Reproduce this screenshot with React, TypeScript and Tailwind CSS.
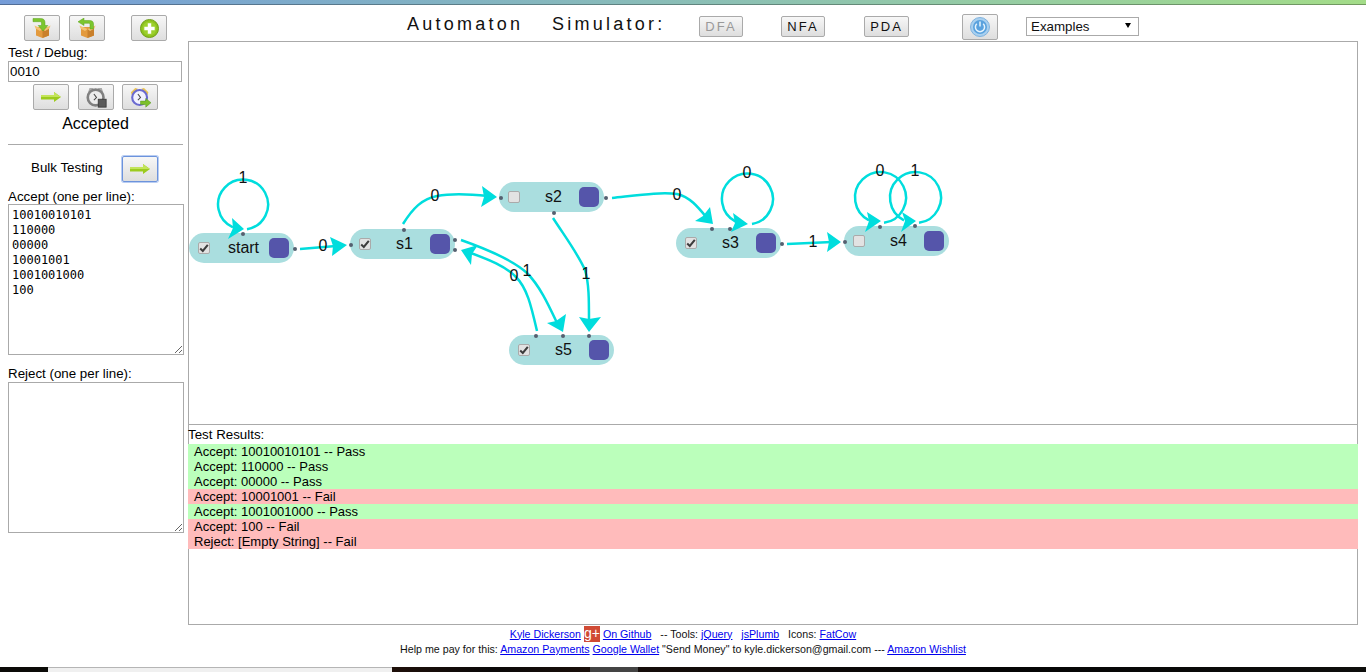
import React from "react"

const nodes = [
  { name: "start", x: 189, y: 233, checked: true },
  { name: "s1", x: 350, y: 229, checked: true },
  { name: "s2", x: 499, y: 182, checked: false },
  { name: "s3", x: 676, y: 228, checked: true },
  { name: "s4", x: 844, y: 226, checked: false },
  { name: "s5", x: 509, y: 335, checked: true },
]

const dots = [
  [243, 234], [295, 249], [351, 245], [404, 230], [455, 240], [455, 250],
  [501, 198], [606, 198], [554, 213], [712, 229], [730, 229], [782, 244],
  [845, 242], [880, 227], [915, 226], [536, 336], [563, 336], [589, 336],
]

// path + arrow head (tip, wing, notch, wing)
const edges = [
  { d: "M247 229.2 A25 25 0 1 0 233 227.4", head: "244,229 228,239 233,228 232,218" },
  { d: "M300 249 L336 246", head: "347,245 330,237 333,246 332,256" },
  { d: "M403 224 C413 208 422 199 437 196 C452 193 470 194 488 196", head: "497,197 482,186 484,197 481,207" },
  { d: "M461 240 C495 252 515 262 527 273 C540 286 549 306 558 325", head: "563,332 547,323 556,321 566,314" },
  { d: "M537 331 C531 305 527 288 516 277 C505 266 490 260 468 252", head: "461,250 478,245 472,254 471,265" },
  { d: "M553 218 C566 238 578 254 585 270 C589 283 589 300 589 322", head: "589,332 579,317 589,319 601,317" },
  { d: "M612 198 C640 195 660 192 677 194 C690 197 698 207 707 218", head: "713,224 695,221 703,216 710,207" },
  { d: "M752 224.1 A25.5 25.5 0 1 0 736 221.8", head: "748,224 731,232 735,223 733,213" },
  { d: "M787 244 L832 242", head: "841,242 827,232 829,242 827,252" },
  { d: "M884 222.8 A25.5 25.5 0 1 0 869 220.3", head: "881,221 865,232 869,221 867,212" },
  { d: "M919 222.8 A25.5 25.5 0 1 0 904 220.3", head: "916,221 901,232 905,221 902,212" },
]

const labels = [
  ["1", 243, 178], ["0", 323, 246], ["0", 435, 196], ["1", 527, 271], ["0", 514, 276], ["1", 586, 274],
  ["0", 677, 195], ["0", 747, 173], ["1", 813, 242], ["0", 880, 171], ["1", 915, 171],
] as const

const results = [
  { text: "Accept: 10010010101 -- Pass", ok: true },
  { text: "Accept: 110000 -- Pass", ok: true },
  { text: "Accept: 00000 -- Pass", ok: true },
  { text: "Accept: 10001001 -- Fail", ok: false },
  { text: "Accept: 1001001000 -- Pass", ok: true },
  { text: "Accept: 100 -- Fail", ok: false },
  { text: "Reject: [Empty String] -- Fail", ok: false },
]

function IconButton({ children, className = "" }: { children: React.ReactNode; className?: string }) {
  return (
    <button className={`flex h-[26px] w-[36px] shrink-0 items-center justify-center rounded-[2px] border border-[#aaa] bg-linear-to-b from-[#f7f7f7] to-[#dedede] ${className}`}>
      {children}
    </button>
  )
}

function ModeButton({ label, disabled, className = "" }: { label: string; disabled?: boolean; className?: string }) {
  return (
    <button className={`flex h-[21px] shrink-0 items-center justify-center rounded-[2px] border border-[#aaa] bg-linear-to-b from-[#f7f7f7] to-[#dedede] text-[13px] tracking-[2px] ${disabled ? "text-[#999]" : "text-[#111]"} ${className}`}>
      {label}
    </button>
  )
}

function BoxIcon({ flip }: { flip?: boolean }) {
  return (
    <svg width="20" height="20" viewBox="0 0 20 20">
      <path d="M4 9 L17 9 L17 17.5 L10.5 20 L4 17.5 Z" fill="#e39a3e" />
      <path d="M10.5 11 L10.5 20 L17 17.5 L17 9 Z" fill="#c9802c" />
      <path d="M2.5 7.5 L7 9.5 L10.5 11 L8 13 L3.5 10.5 Z M18.5 7.5 L14 9.5 L10.5 11 L13 13 L17.5 10.5 Z" fill="#f2c373" />
      <path
        d={flip
          ? "M16.5 11 L16.5 6 C16.5 3.5 15 2.5 12.5 2.5 L7 2.5 L7 0 L1 3.8 L7 7.5 L7 5.3 L11.5 5.3 C12.6 5.3 13 5.8 13 6.8 L13 11 Z"
          : "M1 0.5 L8.5 0.5 C11.5 0.5 13 2 13 4.5 L13 7.5 L15.8 7.5 L11 13 L6.2 7.5 L9.5 7.5 L9.5 5.2 C9.5 4.2 9 3.7 8 3.7 L1 3.7 Z"}
        fill="#7cc62e"
        stroke="#5ba01c"
        strokeWidth="0.5"
      />
    </svg>
  )
}

function GreenArrow() {
  return (
    <svg width="20" height="10" viewBox="0 0 20 10">
      <path d="M0 3 L13 3 L13 0 L20 5 L13 10 L13 7.5 L0 7.5 Z" fill="#9ccb1e" />
      <path d="M0 3 L13 3 L13 0 L17 3 L20 5 L0 5 Z" fill="#c3e45a" />
    </svg>
  )
}

function PlusIcon() {
  return (
    <svg width="19" height="19" viewBox="0 0 22 22">
      <circle cx="11" cy="11" r="10.5" fill="#8dc21f" stroke="#6b9a14" />
      <circle cx="11" cy="11" r="8" fill="#9cd02c" />
      <path d="M9 5 H13 V9 H17 V13 H13 V17 H9 V13 H5 V9 H9 Z" fill="#fff" />
    </svg>
  )
}

function ClockStopIcon() {
  return (
    <svg width="21" height="21" viewBox="0 0 24 24">
      <path d="M4 1 L9 1 L2 7 Z M18 1 L13 1 L20 7 Z" fill="#aaa" />
      <circle cx="11" cy="12" r="9" fill="#ececec" stroke="#808080" strokeWidth="3" />
      <path d="M9 8 L12 12 L9 15" fill="none" stroke="#444" strokeWidth="1.2" />
      <rect x="14" y="14" width="9" height="9" fill="#5a5a5a" stroke="#3a3a3a" />
    </svg>
  )
}

function ClockPlayIcon() {
  return (
    <svg width="21" height="21" viewBox="0 0 24 24">
      <path d="M1 6 L6 1 L9 2 L2 9 Z M21 6 L16 1 L13 2 L20 9 Z" fill="#e9c252" />
      <circle cx="11" cy="12" r="8.5" fill="#f2f2ff" stroke="#6a6ad0" strokeWidth="2.4" />
      <path d="M9 8 L12 12 L9 15" fill="none" stroke="#444" strokeWidth="1.2" />
      <path d="M12 16 H18 V13 L24 18 L18 23 V20 H12 Z" fill="#7cc02a" stroke="#4f8f16" strokeWidth="0.5" />
    </svg>
  )
}

function PowerIcon() {
  return (
    <svg width="20" height="20" viewBox="0 0 20 20">
      <circle cx="10" cy="10" r="9.5" fill="#a9d0ef" stroke="#7fb2de" />
      <circle cx="10" cy="10" r="7" fill="#5aa2de" />
      <path d="M6.8 6.8 A4.6 4.6 0 1 0 13.2 6.8" fill="none" stroke="#e6f3fc" strokeWidth="1.5" />
      <path d="M10 4.5 V9.5" stroke="#e6f3fc" strokeWidth="1.5" />
    </svg>
  )
}

function CheckBox({ checked }: { checked: boolean }) {
  return (
    <div className="flex h-[12px] w-[12px] shrink-0 items-center justify-center rounded-[2px] border border-[#aaa] bg-[#e2e2e2]">
      {checked && (
        <svg width="10" height="10" viewBox="0 0 10 10">
          <path d="M1.2 5.5 L3.8 8 L8.8 1.8" fill="none" stroke="#3c3c3c" strokeWidth="2" />
        </svg>
      )}
    </div>
  )
}

function StateNode({ name, x, y, checked }: { name: string; x: number; y: number; checked: boolean }) {
  return (
    <div
      className="absolute flex h-[30px] w-[105px] items-center rounded-[15px] bg-[#aadedf] pl-[9px] pr-[5px]"
      style={{ left: x - 189, top: y - 42 }}
    >
      <CheckBox checked={checked} />
      <span className="flex-1 pl-[8px] text-center text-[16px] text-[#111]">{name}</span>
      <div className="h-[20px] w-[20px] rounded-[5px] bg-[#5555aa]" />
    </div>
  )
}

const linkClass = "text-[#0000ee] underline"

export default function App() {
  return (
    <div className="flex h-[672px] w-[1366px] flex-col overflow-hidden bg-white font-['Liberation_Sans',Arial,sans-serif] text-black">
      <div className="h-[5px] shrink-0 border-b border-black/30 bg-linear-to-r from-[#759cd8] to-[#a3dc88]" />

      <div className="flex min-h-0 flex-1">
        {/* sidebar */}
        <div className="ml-[8px] w-[180px] shrink-0">
          <div className="mt-[10px] flex">
            <IconButton className="ml-[16px]"><BoxIcon /></IconButton>
            <IconButton className="ml-[9px]"><BoxIcon flip /></IconButton>
            <IconButton className="ml-[26px]"><PlusIcon /></IconButton>
          </div>
          <div className="mt-[4px] h-[16px] text-[13.5px] leading-[16px]">Test / Debug:</div>
          <input
            readOnly
            value="0010"
            className="block h-[21px] w-[174px] border border-[#aaa] px-[1px] text-[13.33px] outline-none"
          />
          <div className="mt-[2px] flex">
            <IconButton className="ml-[25px]"><GreenArrow /></IconButton>
            <IconButton className="ml-[9px]"><ClockStopIcon /></IconButton>
            <IconButton className="ml-[8px]"><ClockPlayIcon /></IconButton>
          </div>
          <div className="mt-[5px] w-[175px] text-center text-[16px] leading-[18px]">Accepted</div>
          <div className="mt-[11px] h-[1px] w-[175px] bg-[#aaa]" />
          <div className="mt-[11px] flex items-center">
            <span className="mb-[2px] ml-[23px] w-[91px] text-[13.33px]">Bulk Testing</span>
            <IconButton className="border-[#6c93dc]! shadow-[0_0_0_1px_#b9cdf2]"><GreenArrow /></IconButton>
          </div>
          <div className="mt-[6px] h-[16px] text-[13.33px] leading-[18px]">Accept (one per line):</div>
          <textarea
            readOnly
            value={"10010010101\n110000\n00000\n10001001\n1001001000\n100"}
            className="block h-[151px] w-[176px] border border-[#aaa] px-[3px] py-[3px] font-['DejaVu_Sans_Mono',monospace] text-[12px] leading-[15px] outline-none"
          />
          <div className="mt-[10px] h-[17px] text-[13.33px] leading-[18px]">Reject (one per line):</div>
          <textarea
            readOnly
            value=""
            className="block h-[151px] w-[176px] border border-[#aaa] outline-none"
          />
        </div>

        {/* main column */}
        <div className="w-[1170px] shrink-0">
          <div className="flex h-[36px] items-center pt-[7px]">
            <div className="ml-[219px] w-[292px] shrink-0 whitespace-pre pb-[4px] text-[18px] tracking-[3.25px] text-[#111] [word-spacing:1.33px]">
              {"Automaton   Simulator:"}
            </div>
            <ModeButton label="DFA" disabled className="w-[44px]" />
            <ModeButton label="NFA" className="ml-[38px] w-[44px]" />
            <ModeButton label="PDA" className="ml-[39px] w-[45px]" />
            <IconButton className="ml-[53px]"><PowerIcon /></IconButton>
            <div className="relative ml-[28px] h-[19px] w-[113px] border border-[#aaa] bg-white pl-[4px] text-[13.33px] leading-[17px] text-[#111]">
              Examples
              <div className="absolute right-[7px] top-[5px] h-0 w-0 border-x-[3.5px] border-t-[5px] border-x-transparent border-t-black" />
            </div>
          </div>

          {/* canvas, nodes sit on it freely */}
          <div className="relative h-[384px] w-full overflow-hidden border border-[#aaa]">
            {nodes.map((n) => (
              <StateNode key={n.name} {...n} />
            ))}
            <svg className="absolute left-0 top-0" width="1168" height="382" viewBox="189 42 1168 382">
              {edges.map((e, i) => (
                <g key={i}>
                  <path d={e.d} fill="none" stroke="#00dddd" strokeWidth="2.5" />
                  <polygon points={e.head} fill="#00dddd" />
                </g>
              ))}
              {dots.map(([x, y], i) => (
                <circle key={i} cx={x} cy={y} r="2" fill="#556070" />
              ))}
            </svg>
            {labels.map(([t, x, y], i) => (
              <span
                key={i}
                className="absolute -translate-x-1/2 -translate-y-1/2 text-[16px] leading-[18px] text-[#111]"
                style={{ left: x - 189, top: y - 42 }}
              >
                {t}
              </span>
            ))}
          </div>

          <div className="h-[200px] w-full border-x border-b border-[#aaa]">
            <div className="-ml-[1px] h-[19px] pt-[2px] text-[13.33px] leading-[15px]">Test Results:</div>
            <div className="-mx-[1px]">
              {results.map((r, i) => (
                <div key={i} className={`h-[15px] pl-[6px] text-[13px] leading-[15px] ${r.ok ? "bg-[#bbffbb]" : "bg-[#ffbbbb]"}`}>
                  {r.text}
                </div>
              ))}
            </div>
          </div>
        </div>
      </div>

      <div className="h-[42px] shrink-0 pt-[1px] text-center text-[10.67px] leading-[15px] text-[#111]">
        <div className="flex h-[16px] items-center justify-center">
          <a className={linkClass}>Kyle Dickerson</a>
          <span className="mx-[3px] flex h-[16px] w-[16px] items-center justify-center bg-[#d04a35] pb-[2px] text-[14px] text-white">g+</span>
          <a className={linkClass}>On Github</a>
          <span className="whitespace-pre">{"   -- Tools: "}</span>
          <a className={linkClass}>jQuery</a>
          <span className="whitespace-pre">{"   "}</span>
          <a className={linkClass}>jsPlumb</a>
          <span className="whitespace-pre">{"   Icons: "}</span>
          <a className={linkClass}>FatCow</a>
        </div>
        <div className="whitespace-pre">
          {"Help me pay for this: "}
          <a className={linkClass}>Amazon Payments</a>
          {" "}
          <a className={linkClass}>Google Wallet</a>
          {' "Send Money" to kyle.dickerson@gmail.com --- '}
          <a className={linkClass}>Amazon Wishlist</a>
        </div>
      </div>

      <div className="flex h-[5px] shrink-0">
        <div className="w-[48px] bg-[#0c0b08]" />
        <div className="w-[344px] border-t border-[#b5b5b5] bg-[#f0f0f0]" />
        <div className="w-[198px] bg-linear-to-r from-[#1f100a] via-[#0a0808] to-[#1a0f0a]" />
        <div className="w-[48px] bg-[#444]" />
        <div className="flex-1 bg-linear-to-r from-[#150d0a] via-[#050505] to-[#0e0e0c]" />
      </div>
    </div>
  )
}
